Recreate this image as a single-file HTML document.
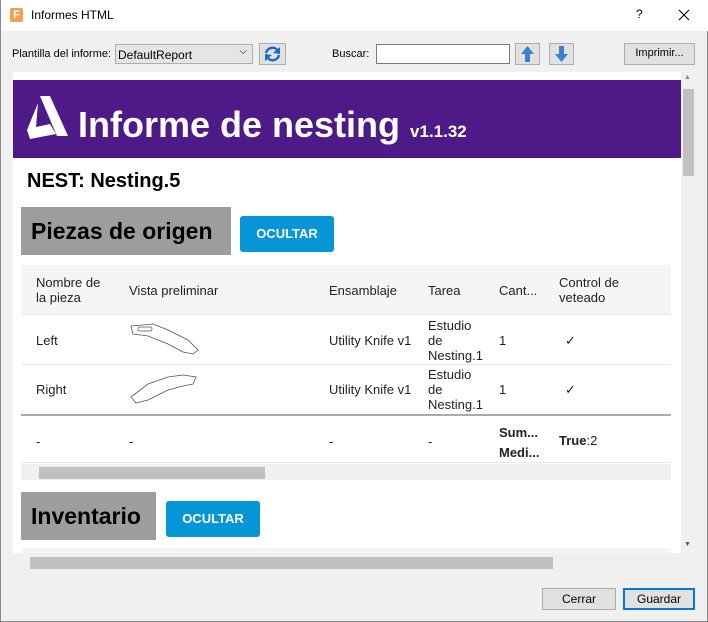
<!DOCTYPE html>
<html><head><meta charset="utf-8"><style>
*{box-sizing:border-box;margin:0;padding:0}
body{width:708px;height:622px;overflow:hidden;background:#f0f0f0;font-family:"Liberation Sans",sans-serif;position:relative;border:1px solid #888;border-top:none}
.abs{position:absolute}
.ui{font-size:12px;color:#000}
.btn{position:absolute;background:#e1e1e1;border:1px solid #adadad;font-size:12px;text-align:center}
.t{position:absolute;font-size:13px;color:#222;line-height:15px;font-family:"Liberation Sans Narrow","Liberation Sans",sans-serif}
.oc{position:absolute;background:#0696d7;color:#fff;font-weight:bold;font-size:13px;border-radius:3px;text-align:center;line-height:36px;width:94px;height:36px}
.gh{position:absolute;background:#9d9d9d;font-weight:bold;font-size:23px;line-height:48px;padding-left:10px;height:48px}
</style></head><body>
<div class="abs" style="left:0;top:0;width:708px;height:31px;background:#fff"></div>
<div class="abs" style="left:9px;top:8px;width:13px;height:14px;background:#f0a050;border-radius:2px;color:#fff;font-size:11px;font-weight:bold;text-align:center;line-height:14px">F</div>
<div class="abs ui" style="left:30px;top:8px">Informes HTML</div>
<div class="abs ui" style="left:635px;top:7px">?</div>
<svg class="abs" style="left:677px;top:9px" width="12" height="12"><path d="M1 1 L11 11 M11 1 L1 11" stroke="#000" stroke-width="1.1"/></svg>

<div class="abs ui" style="left:11px;top:48px;font-size:11px">Plantilla del informe:</div>
<div class="abs" style="left:114px;top:44px;width:138px;height:20px;border:1px solid #adadad;background:#e5e5e5;font-size:12px;padding:3px 2px">DefaultReport<span style="position:absolute;right:5px;top:1px;font-size:10px">⌵</span></div>
<div class="btn" style="left:258px;top:43px;width:27px;height:22px"><svg width="25" height="20"><path d="M6 9 A6.5 6.5 0 0 1 18 7" fill="none" stroke="#1a6cc4" stroke-width="2.5"/><path d="M20 3 L20 10 L13 9 Z" fill="#1a6cc4"/><path d="M19 11 A6.5 6.5 0 0 1 7 13" fill="none" stroke="#1a6cc4" stroke-width="2.5"/><path d="M5 17 L5 10 L12 11 Z" fill="#1a6cc4"/></svg></div>
<div class="abs ui" style="left:331px;top:48px;font-size:11px">Buscar:</div>
<div class="abs" style="left:375px;top:44px;width:134px;height:20px;border:1px solid #7a7a7a;background:#fff"></div>
<div class="btn" style="left:514px;top:43px;width:25px;height:22px"><svg width="23" height="20"><path d="M11.5 2 L18 10 H14 V18 H9 V10 H5 Z" fill="#3a7fd0"/></svg></div>
<div class="btn" style="left:548px;top:43px;width:25px;height:22px"><svg width="23" height="20"><path d="M11.5 18 L18 10 H14 V2 H9 V10 H5 Z" fill="#3a7fd0"/></svg></div>
<div class="btn" style="left:623px;top:43px;width:71px;height:22px;line-height:19px;font-size:11px">Imprimir...</div>

<div class="abs" style="left:12px;top:72px;width:668px;height:481px;background:#fff;overflow:hidden">
  <div class="abs" style="left:0;top:8px;width:669px;height:78px;background:#4e1a87"></div>
  <svg class="abs" style="left:13px;top:22px" width="44" height="45"><path d="M14 2 H24 L42 42 H31 Z" fill="#fff"/><path d="M12 9 L1 36 L4 45 L30 40 L24 30 L10 33 Z" fill="#fff"/></svg>
  <div class="abs" style="left:65px;top:32px;color:#fff;font-weight:bold;font-size:36px">Informe de nesting <span style="font-size:17px">v1.1.32</span></div>
  <div class="abs" style="left:14px;top:98px;font-weight:bold;font-size:20px">NEST: Nesting.5</div>
  <div class="gh" style="left:8px;top:135px;width:210px">Piezas de origen</div>
  <div class="oc" style="left:227px;top:144px">OCULTAR</div>
  <div class="abs" style="left:8px;top:193px;width:650px;height:50px;background:#f5f5f5"></div>
  <div class="abs" style="left:8px;top:242px;width:650px;height:1px;background:#e8e8e8"></div>
  <div class="abs" style="left:8px;top:292px;width:650px;height:1px;background:#e8e8e8"></div>
  <div class="abs" style="left:8px;top:342px;width:650px;height:2px;background:#aaa"></div>
  <div class="abs" style="left:8px;top:390px;width:650px;height:1px;background:#e8e8e8"></div>
  <div class="t" style="left:23px;top:203px">Nombre de<br>la pieza</div>
  <div class="t" style="left:116px;top:211px">Vista preliminar</div>
  <div class="t" style="left:316px;top:211px">Ensamblaje</div>
  <div class="t" style="left:415px;top:211px">Tarea</div>
  <div class="t" style="left:486px;top:211px">Cant...</div>
  <div class="t" style="left:546px;top:203px">Control de<br>veteado</div>
  <div class="t" style="left:23px;top:261px">Left</div>
  <svg class="abs" style="left:115px;top:250px" width="75" height="35"><path d="M3 4 L25 2 L40 8 L60 18 L70 28 L65 32 L55 30 L40 22 L20 14 L5 12 Z" fill="none" stroke="#555" stroke-width="0.8"/><rect x="10" y="5" width="14" height="4" rx="2" fill="none" stroke="#555" stroke-width="0.8"/></svg>
  <div class="t" style="left:316px;top:261px">Utility Knife v1</div>
  <div class="t" style="left:415px;top:246px">Estudio<br>de<br>Nesting.1</div>
  <div class="t" style="left:486px;top:261px">1</div>
  <div class="t" style="left:552px;top:261px">✓</div>
  <div class="t" style="left:23px;top:310px">Right</div>
  <svg class="abs" style="left:115px;top:300px" width="75" height="35"><path d="M3 25 L20 12 L40 5 L55 3 L68 5 L65 12 L55 14 L40 18 L20 28 L8 31 Z" fill="none" stroke="#555" stroke-width="0.8"/></svg>
  <div class="t" style="left:316px;top:310px">Utility Knife v1</div>
  <div class="t" style="left:415px;top:295px">Estudio<br>de<br>Nesting.1</div>
  <div class="t" style="left:486px;top:310px">1</div>
  <div class="t" style="left:552px;top:310px">✓</div>
  <div class="t" style="left:23px;top:362px">-</div>
  <div class="t" style="left:116px;top:362px">-</div>
  <div class="t" style="left:316px;top:362px">-</div>
  <div class="t" style="left:415px;top:362px">-</div>
  <div class="t" style="left:486px;top:351px;font-weight:bold;line-height:20px">Sum...<br>Medi...</div>
  <div class="t" style="left:546px;top:361px"><b>True</b>:2</div>
  <div class="abs" style="left:8px;top:392px;width:650px;height:16px;background:#f0f0f0"></div>
  <div class="abs" style="left:26px;top:395px;width:226px;height:12px;background:#c0c0c0"></div>
  <div class="gh" style="left:8px;top:420px;width:135px">Inventario</div>
  <div class="oc" style="left:153px;top:429px">OCULTAR</div>
  <div class="abs" style="left:8px;top:476px;width:650px;height:10px;background:#f5f5f5"></div>
</div>
<div class="abs" style="left:680px;top:72px;width:15px;height:481px;background:#f0f0f0"></div>
<div class="abs" style="left:682px;top:89px;width:11px;height:87px;background:#c0c0c0"></div>
<div class="abs" style="left:683px;top:74px;font-size:7px;color:#888">▲</div>
<div class="abs" style="left:683px;top:541px;font-size:7px;color:#555">▼</div>
<div class="abs" style="left:12px;top:553px;width:683px;height:18px;background:#f0f0f0"></div>
<div class="abs" style="left:29px;top:557px;width:523px;height:12px;background:#c0c0c0"></div>
<div class="btn" style="left:541px;top:588px;width:74px;height:22px;line-height:20px">Cerrar</div>
<div class="btn" style="left:622px;top:588px;width:72px;height:22px;line-height:18px;border:2px solid #0078d7">Guardar</div>
</body></html>
